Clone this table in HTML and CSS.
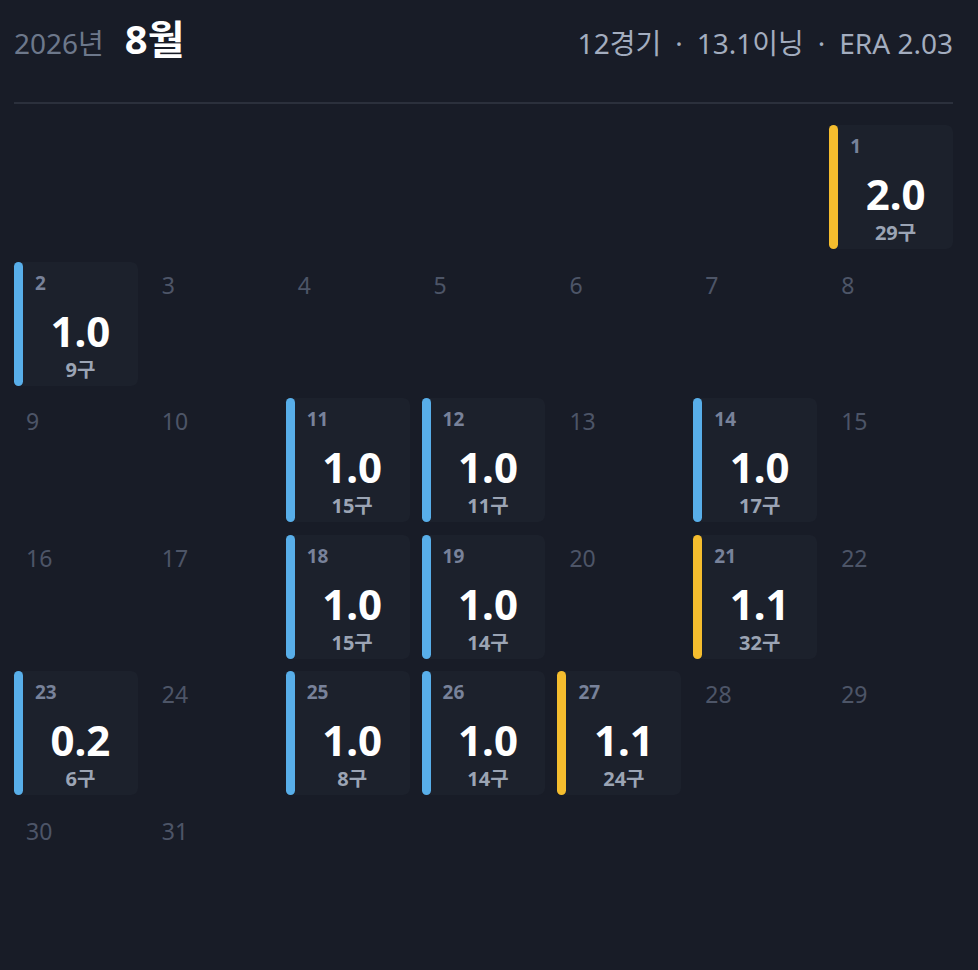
FILE: index.html
```html
<!DOCTYPE html>
<html lang="ko">
<head>
<meta charset="utf-8">
<title>2026년 8월</title>
<link rel="stylesheet" href="styles.css">
</head>
<body>
<div class="page">
  <header class="head">
    <div class="title"><span class="year">2026년</span><span class="month">8월</span></div>
    <div class="stats"><span>12경기</span><span class="sep">·</span><span>13.1이닝</span><span class="sep">·</span><span>ERA 2.03</span></div>
  </header>
  <div class="cal">
    <div class="cell"></div><div class="cell"></div><div class="cell"></div><div class="cell"></div><div class="cell"></div><div class="cell"></div>
    <div class="card y"><div class="bar"></div><div class="body"><div class="d">1</div><div class="v">2.0</div><div class="s">29구</div></div></div>

    <div class="card b"><div class="bar"></div><div class="body"><div class="d">2</div><div class="v">1.0</div><div class="s">9구</div></div></div>
    <div class="cell"><span class="n">3</span></div>
    <div class="cell"><span class="n">4</span></div>
    <div class="cell"><span class="n">5</span></div>
    <div class="cell"><span class="n">6</span></div>
    <div class="cell"><span class="n">7</span></div>
    <div class="cell"><span class="n">8</span></div>

    <div class="cell"><span class="n">9</span></div>
    <div class="cell"><span class="n">10</span></div>
    <div class="card b"><div class="bar"></div><div class="body"><div class="d">11</div><div class="v">1.0</div><div class="s">15구</div></div></div>
    <div class="card b"><div class="bar"></div><div class="body"><div class="d">12</div><div class="v">1.0</div><div class="s">11구</div></div></div>
    <div class="cell"><span class="n">13</span></div>
    <div class="card b"><div class="bar"></div><div class="body"><div class="d">14</div><div class="v">1.0</div><div class="s">17구</div></div></div>
    <div class="cell"><span class="n">15</span></div>

    <div class="cell"><span class="n">16</span></div>
    <div class="cell"><span class="n">17</span></div>
    <div class="card b"><div class="bar"></div><div class="body"><div class="d">18</div><div class="v">1.0</div><div class="s">15구</div></div></div>
    <div class="card b"><div class="bar"></div><div class="body"><div class="d">19</div><div class="v">1.0</div><div class="s">14구</div></div></div>
    <div class="cell"><span class="n">20</span></div>
    <div class="card y"><div class="bar"></div><div class="body"><div class="d">21</div><div class="v">1.1</div><div class="s">32구</div></div></div>
    <div class="cell"><span class="n">22</span></div>

    <div class="card b"><div class="bar"></div><div class="body"><div class="d">23</div><div class="v">0.2</div><div class="s">6구</div></div></div>
    <div class="cell"><span class="n">24</span></div>
    <div class="card b"><div class="bar"></div><div class="body"><div class="d">25</div><div class="v">1.0</div><div class="s">8구</div></div></div>
    <div class="card b"><div class="bar"></div><div class="body"><div class="d">26</div><div class="v">1.0</div><div class="s">14구</div></div></div>
    <div class="card y"><div class="bar"></div><div class="body"><div class="d">27</div><div class="v">1.1</div><div class="s">24구</div></div></div>
    <div class="cell"><span class="n">28</span></div>
    <div class="cell"><span class="n">29</span></div>

    <div class="cell"><span class="n">30</span></div>
    <div class="cell"><span class="n">31</span></div>
  </div>
</div>
</body>
</html>
```
FILE: styles.css
```css
html, body {
  margin: 0;
  padding: 0;
  background: #181c27;
}
body {
  font-family: "Noto Sans", "Noto Sans CJK KR", sans-serif;
  color: #ffffff;
  height: 970px;
  overflow: hidden;
}
.page {
  width: 939px;
  margin-left: 14px;
}
.head {
  display: flex;
  justify-content: space-between;
  align-items: baseline;
  padding-top: 18px;
  padding-bottom: 42px;
  border-bottom: 2px solid #2b303c;
  line-height: 42px;
  height: 42px;
}
.title {
  display: flex;
  align-items: baseline;
  gap: 21px;
}
.year {
  font-size: 28px;
  color: #6d788b;
}
.month {
  font-size: 40px;
  font-weight: 700;
  color: #ffffff;
}
.stats {
  font-size: 28px;
  color: #a3adbf;
  display: flex;
  align-items: baseline;
}
.sep {
  margin: 0 14px;
}
.cal {
  margin-top: 21px;
  display: grid;
  grid-template-columns: repeat(7, 1fr);
  grid-auto-rows: 124px;
  column-gap: 12px;
  row-gap: 12.5px;
}
.cell {
  padding: 9px 12px 0;
}
.n {
  font-size: 23px;
  line-height: 28px;
  color: #4d5567;
}
.card {
  display: flex;
  background: #1c212c;
  border-radius: 7px;
}
.bar {
  width: 9px;
  border-radius: 5px;
  flex: none;
}
.card.b .bar { background: #58aee9; }
.card.y .bar { background: #f5bd2e; }
.body {
  flex: 1;
  display: flex;
  flex-direction: column;
  padding: 10px 0 0 12px;
}
.d {
  font-size: 19px;
  line-height: 22px;
  font-weight: 700;
  color: #78829a;
}
.v {
  margin-top: 15px;
  margin-left: -12px;
  font-size: 42px;
  line-height: 44px;
  font-weight: 700;
  text-align: center;
  color: #ffffff;
}
.s {
  margin-top: 6px;
  margin-left: -12px;
  font-size: 20px;
  line-height: 22px;
  font-weight: 700;
  text-align: center;
  color: #9ba4b4;
}
```
